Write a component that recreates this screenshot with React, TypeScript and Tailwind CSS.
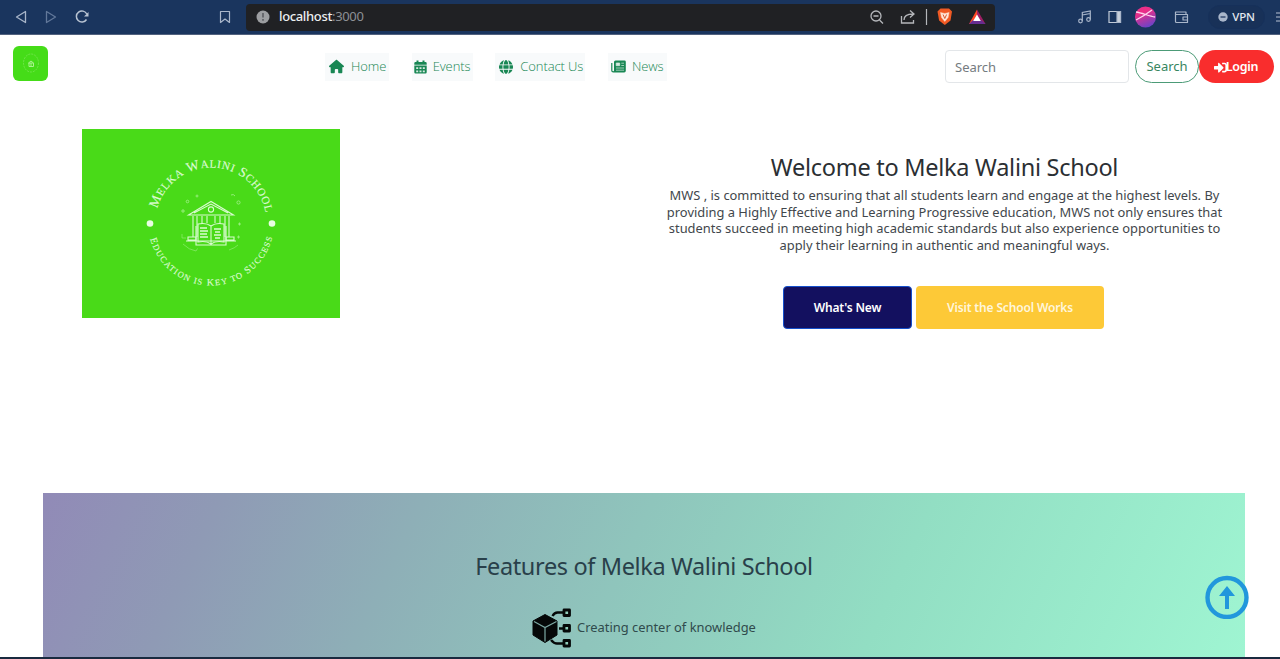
import React from "react";
import { FaHouse, FaGlobe } from "react-icons/fa6";
import { FaSignInAlt } from "react-icons/fa";

const sans = "font-['Noto_Sans',sans-serif]";

function Building() {
  return (
    <g fill="none" stroke="#d9fbd0" strokeWidth="1.1">
      <path d="M188.500 215 L211 201.500 L233.500 215 Z M194 213 L211 204 L228 213" />
      <circle cx="211" cy="209.500" r="2.600" />
      <path d="M193 216v21M197 216v21M202 216v8M207 216v7M215 216v7M220 216v8M225 216v21M229 216v21M188 237h8v3h-8zM226 237h8v3h-8zM186 241h50" />
      <path d="M211 226c-4-3-8-3-13-2v18c5-1 9-1 13 2c4-3 8-3 13-2v-18c-5-1-9-1-13 2v18M196 226v19h30v-19" />
      <path d="M200 228h7M200 231h8M200 234h7M200 237h8M214 229h7M215 232h5M214 235h7M215 238h5" strokeWidth="1.400" />
    </g>
  );
}

function SchoolLogo() {
  return (
    <svg width="258" height="189" viewBox="82 129 258 189" className="block bg-[#49da18]" role="img">
      <defs>
        <path id="ringTop" d="M155.500 223 A55.500 55.500 0 0 1 266.500 223" />
        <path id="ringBottom" d="M148 222.500 A63 63 0 0 0 274 222.500" />
      </defs>
      <g fill="#dcfbd3" stroke="#dcfbd3" strokeWidth="0.150" className="font-['Liberation_Serif',serif]">
        <text fontSize="13.500">
          <textPath href="#ringTop" startOffset="14.500" textLength="149">
            M<tspan fontSize="11">ELKA</tspan> W<tspan fontSize="11">ALINI</tspan> S<tspan fontSize="11">CHOOL</tspan>
          </textPath>
        </text>
        <text fontSize="10">
          <textPath href="#ringBottom" startOffset="16.500" textLength="166">
            E<tspan fontSize="8.500">DUCATION IS</tspan> K<tspan fontSize="8.500">EY TO</tspan> S<tspan fontSize="8.500">UCCESS</tspan>
          </textPath>
        </text>
      </g>
      <circle cx="150" cy="223.500" r="3.300" fill="#e9fde3" />
      <circle cx="272" cy="223.500" r="3.300" fill="#e9fde3" />
      <Building />
      <g fill="none" stroke="#9bef82" strokeWidth="0.900">
        <path d="M181 211h4M183 209v4M195.500 196h3M197 194.500v3M231 195a3 3 0 0 1 4 1M238 224h3M239.500 222.500v3M237 237h3M238.500 235.500v3" />
        <path d="M182 234v4h4M183 244q6 6 13 7l1.500-2.500M229 250q6-2 9-5" strokeWidth="0.600" />
        <circle cx="187.500" cy="201.500" r="1.300" />
        <circle cx="238.500" cy="202.500" r="1.600" />
      </g>
    </svg>
  );
}

function BrowserBar() {
  return (
    <div className="flex h-[35px] w-full shrink-0 items-center border-b border-[#52627f] bg-[#1a355e] text-[#a9b6ca]">
      <svg className="ml-3 h-5 w-[82px] shrink-0" viewBox="12 7 82 20" fill="none" strokeWidth="1.300">
        <path d="M25.500 11.500v11l-9-5.500z" stroke="#a9b6ca" strokeLinejoin="round" />
        <path d="M46.500 11.500v11l9-5.500z" stroke="#62789a" strokeLinejoin="round" />
        <path d="M86.500 19.500a5.500 5.500 0 1 1 .3-5.500" stroke="#b8c3d2" strokeWidth="1.500" />
        <path d="M88.500 12v4.500h-4.500z" fill="#b8c3d2" />
      </svg>
      <svg className="ml-[125px] h-4 w-3 shrink-0" viewBox="0 0 12 16" fill="none" stroke="#a9b6ca" strokeWidth="1.200">
        <path d="M1.500 2.500h9v11l-4.500-3.500l-4.500 3.500z" strokeLinejoin="round" />
      </svg>
      <div className="ml-[15px] flex h-[27px] w-[749px] shrink-0 items-center rounded bg-[#202124]">
        <svg className="ml-[10px] h-[14px] w-[14px]" viewBox="0 0 14 14">
          <circle cx="7" cy="7" r="6.500" fill="#9c9ea1" />
          <path d="M7 3v4.500M7 9v1.700" stroke="#55585d" strokeWidth="1.500" />
        </svg>
        <div className={`${sans} ml-[9px] text-[13px] tracking-[-0.35px] text-[#8d9095]`}>
          <span className="font-medium text-[#eceef0]">localhost</span>:3000
        </div>
        <svg className="ml-auto h-6 w-[130px]" viewBox="865 5 130 24" fill="none" stroke="#b5b7bb" strokeWidth="1.300">
          <circle cx="876" cy="16" r="5" />
          <path d="M879.500 20l3.500 3.500M873.500 16h5M901.500 16v7h12v-3M904 20c0-4 3-6 9-6M910 10.500l4 3.500l-4 3.500" />
          <path d="M926.500 9v16" strokeWidth="1.200" />
          <path d="M937.500 11.500l3-3h8.500l3 3l-1.500 9l-5.700 4.500l-5.700-4.500z" fill="#f15a24" stroke="none" />
          <path d="M940.500 12.500l4.300 1l4.300-1l-1 5l-3.300 4l-3.300-4z" fill="#ffe9dd" stroke="#ffd0b5" strokeWidth="0.500" />
          <path d="M943 14.500l1.800 4l1.800-4" stroke="#d85b30" strokeWidth="1" />
          <path d="M977 9.500l-8 14.500h8z" fill="#ff4724" stroke="none" />
          <path d="M977 9.500l8.500 14.500h-8.500z" fill="#9e1f63" stroke="none" />
          <path d="M969 24l4-4h8l4.500 4z" fill="#662d91" stroke="none" />
          <path d="M977 14.500l3.800 6.500h-7.600z" fill="white" stroke="none" />
        </svg>
      </div>
      <svg className="ml-[80px] h-6 w-[120px] shrink-0" viewBox="1075 5 120 24" fill="none" stroke="#a9b6ca" strokeWidth="1.200">
        <circle cx="1080.500" cy="21" r="1.800" />
        <circle cx="1088.500" cy="19.500" r="1.800" />
        <path d="M1082.300 21v-8.500l8-1.500v8.500M1082.300 15l8-1.500" />
        <path d="M1109 11.500h11.500v11h-11.500z" stroke="#c0cad8" />
        <path d="M1117 11.500h3.500v11h-3.500z" fill="#c9d1dc" />
        <circle cx="1145.500" cy="17" r="10.500" fill="url(#avatar)" stroke="none" />
        <path d="M1136 12c6 1 13 4 19 5M1136 20c6-3 12-7 16-10" stroke="#ffd5ee" strokeWidth="1.300" />
        <path d="M1186 14.500v-2.500h-10.500v9.500q0 1 1 1h11v-8h-12M1187.500 17h-4.500v3h4.500" strokeLinejoin="round" />
        <defs>
          <linearGradient id="avatar" x1="0.200" y1="0" x2="0.600" y2="1">
            <stop offset="0.300" stopColor="#ea2f88" />
            <stop offset="1" stopColor="#6a43c9" />
          </linearGradient>
        </defs>
      </svg>
      <div className={`${sans} ml-[13px] flex h-6 w-[57px] shrink-0 items-center justify-center gap-[4px] rounded-full border border-[#16305a] bg-[#183158] text-[11.5px] font-medium tracking-[-0.2px] text-[#e3e8ef]`}>
        <svg className="h-[10px] w-[10px]" viewBox="0 0 10 10">
          <circle cx="5" cy="5" r="4.700" fill="#a9b6ca" />
          <path d="M2.500 5h5" stroke="#213a62" strokeWidth="1.300" />
        </svg>
        VPN
      </div>
      <svg className="ml-[11px] h-4 w-1 shrink-0" viewBox="0 0 4 16" stroke="#b7c2d2" strokeWidth="1.200">
        <path d="M0 4h4M0 8h4M0 12h4" />
      </svg>
    </div>
  );
}

const navItem = "flex h-[28px] items-center bg-[#f8fafb] text-[#198754]";
const navText = "font-['Open_Sans',sans-serif] text-[13px] font-light tracking-[-0.1px] whitespace-nowrap";

function NavBar() {
  return (
    <nav className="flex h-[63px] w-full shrink-0 items-center">
      <div className="mb-[7px] ml-[13px] flex h-[35px] w-[35px] items-center justify-center rounded-md bg-[#45dc18]">
        <svg className="h-5 w-5" viewBox="0 0 20 20" fill="none" stroke="#80e85c" strokeWidth="0.700">
          <ellipse cx="10" cy="10" rx="7.500" ry="9" strokeDasharray="2 1" />
          <path d="M7.500 10l2.500-2l2.500 2zM8 10v3.500h4.500v-3.500M10 10v4" strokeWidth="1" stroke="#a9f28e" />
        </svg>
      </div>
      <div className="ml-[277px] flex w-[342px] items-center justify-between">
        <div className={navItem + " w-[64px] pl-1"}><FaHouse size={15} /><span className={navText + " ml-[7px]"}>Home</span></div>
        <div className={navItem + " w-[61px] pl-[2px]"}>
          <svg className="h-[14px] w-[13px]" viewBox="0 0 13 14">
            <path d="M2.500 0.500h2v1.500h4v-1.500h2v1.500h1q1.200 0 1.200 1.300v1.500h-12.400v-1.500q0-1.300 1.200-1.300h1zM0.300 5.500h12.400v6.800q0 1.300-1.200 1.300h-10q-1.200 0-1.200-1.300z" fill="#198754" />
            <path d="M2.200 7.300h2v1.700h-2zM5.500 7.300h2v1.700h-2zM8.800 7.300h2v1.700h-2zM2.200 10.500h2v1.700h-2zM5.500 10.500h2v1.700h-2zM8.800 10.500h2v1.700h-2z" fill="#d6eae1" />
          </svg>
          <span className={navText + " ml-[6px]"}>Events</span>
        </div>
        <div className={navItem + " w-[90px] pl-[4px]"}><FaGlobe size={14} /><span className={navText + " ml-[7px]"}>Contact Us</span></div>
        <div className={navItem + " w-[59px] pl-[3px]"}>
          <svg className="h-[13px] w-[15px]" viewBox="0 0 15 13">
            <path d="M4.500 0.500h9a1.300 1.300 0 0 1 1.300 1.300v9a1.600 1.600 0 0 1-1.600 1.600h-11a2 2 0 0 1-2-2v-7.400h1.200v7.400a.8.8 0 0 0 1.600 0v-8.400a1.500 1.500 0 0 1 1.500-1.500z" fill="#198754" />
            <path d="M5.200 3h3.500v2.700h-3.500zM10.300 3.200h2.700M10.300 5.500h2.700M5 8h8M5 10.200h8" fill="#d6eae1" stroke="#d6eae1" strokeWidth="0.700" />
          </svg>
          <span className={navText + " ml-[6px]"}>News</span>
        </div>
      </div>
      <div className={`${sans} mb-px ml-auto mr-[6px] flex items-center text-[13px]`}>
        <input
          className="h-[33px] w-[184px] rounded border border-[#e3e6e9] px-[9px] pt-px text-[#6c757d] outline-none placeholder:text-[#757b80]"
          placeholder="Search"
        />
        <button className="ml-[6px] h-[33px] w-[64px] rounded-full border border-[#4c9b77] pt-px text-[#38865f]">Search</button>
        <button className="flex h-[33px] w-[75px] items-center justify-center rounded-full bg-[#f92d2d] pr-px pt-[2px] text-[12.5px] font-semibold tracking-[-0.3px] text-white">
          <FaSignInAlt size={13} className="-mr-px" />Login
        </button>
      </div>
    </nav>
  );
}

export default function App() {
  return (
    <div className={`${sans} relative flex h-[659px] w-[1280px] flex-col overflow-hidden bg-white text-[#212529]`}>
      <BrowserBar />
      <NavBar />
      <main className="flex h-[395px] shrink-0">
        <div className="w-[644px] pl-[82px] pt-[31px]"><SchoolLogo /></div>
        <div className="flex w-[601px] flex-col items-center pt-[53px] text-center">
          <h1 className="whitespace-nowrap text-[23.5px] leading-[32px] tracking-[-0.27px] text-[#2b2f33]">Welcome to Melka Walini School</h1>
          <p className="mt-[4px] whitespace-nowrap text-[12.9px] leading-[16.5px] text-[#42474c]">
            MWS , is committed to ensuring that all students learn and engage at the highest levels. By<br />
            providing a Highly Effective and Learning Progressive education, MWS not only ensures that<br />
            students succeed in meeting high academic standards but also experience opportunities to<br />
            apply their learning in authentic and meaningful ways.
          </p>
          <div className="-ml-[2px] mt-[33px] flex gap-1 text-[12px] font-semibold tracking-[-0.15px] text-white">
            <button className="h-[43px] w-[129px] rounded border border-[#1550cc] bg-[#13105f] pt-px">What's New</button>
            <button className="h-[43px] w-[188px] rounded bg-[#fdc937] pt-px text-[#fff6dc]">Visit the School Works</button>
          </div>
        </div>
      </main>
      <section className="ml-[43px] flex h-[164px] w-[1202px] shrink-0 flex-col items-center bg-[linear-gradient(115deg,#918ab7_0%,#8f9ab5_14%,#8eafb7_30%,#8fc5bc_48%,#92dec3_70%,#9ff5d2_100%)] pt-[57px]">
        <h2 className="whitespace-nowrap text-[23.5px] leading-[32px] tracking-[-0.37px] text-[#29404a]">Features of Melka Walini School</h2>
        <div className="mt-[26px] flex items-center gap-[5px]">
          <svg className="h-[40px] w-[40px]" viewBox="532 608 40 40">
            <path d="M545 614.500l12 6.500v14l-12 7.500l-12-7.500v-14z" fill="#050808" stroke="#050808" strokeLinejoin="round" />
            <path d="M534 621.500l11 6l11.500-6M545 627.500v14" stroke="#7ca9a4" strokeWidth="1.200" fill="none" />
            <path d="M552.500 616q2-3.500 5-3.500h6M559 628.500h6M551 640q3 3.500 6 3.500h6" stroke="#050808" strokeWidth="2.400" fill="none" />
            <path d="M564 610h5.500v5.500h-5.500zM564 625.500h5.500v5.500h-5.500zM564 640.500h5.500v5.500h-5.500z" stroke="#050808" strokeWidth="2.800" strokeLinejoin="round" fill="#90cdbb" />
          </svg>
          <span className="whitespace-nowrap text-[12.9px] text-[#304b4c]">Creating center of knowledge</span>
        </div>
      </section>
      <div className="h-[2px] w-full shrink-0 bg-[#192a3f]" />
      <svg className="absolute left-[1205px] top-[575px] h-[44px] w-[44px]" viewBox="0 0 44 44">
        <circle cx="22" cy="22.500" r="19.500" fill="none" stroke="#2197dc" strokeWidth="4.400" />
        <path d="M22 11l8 10h-6v13h-4v-13h-6z" fill="#2197dc" />
      </svg>
    </div>
  );
}
